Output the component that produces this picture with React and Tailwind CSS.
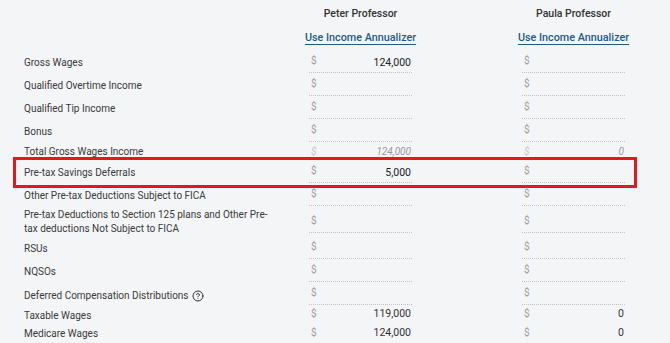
import React from 'react'
import { CircleHelp } from 'lucide-react'

const font = { fontFamily: 'Roboto, "Liberation Sans", sans-serif' }

function Cell({ value, kind = 'input' }) {
  if (kind === 'total') {
    return (
      <div className="w-[103px] h-full flex items-center justify-between pl-[2px] pr-[1px] pb-[1px]">
        <span className="text-[10px] leading-[12px] italic text-[#c4c6c8]">$</span>
        <span className="text-[10px] leading-[12px] italic text-[#9a9a9a]">{value}</span>
      </div>
    )
  }
  if (kind === 'plain') {
    return (
      <div className="w-[103px] h-full flex items-center justify-between pl-[2px] pr-[1px]">
        <span className="text-[10px] leading-[12px] text-[#9c9c9c]">$</span>
        <span className="text-[10.5px] leading-[14px] text-[#333]">{value}</span>
      </div>
    )
  }
  return (
    <div className="w-[103px] h-full flex items-end justify-between pl-[2px] pr-[1px] border-b border-dotted border-[#bfc1c3]">
      <span className="text-[10px] leading-[12px] text-[#9c9c9c] pb-[5px]">$</span>
      <span className="text-[10.5px] leading-[14px] text-[#222] pb-[2px]">{value}</span>
    </div>
  )
}

function Row({ label, h, pt, peter, paula, kind, children }) {
  return (
    <div className="flex" style={{ height: h }}>
      <div className="w-[285px] shrink-0" style={{ paddingTop: pt }}>
        {children || (
          <div className="text-[10px] leading-[14px] text-[#3a3a3a] w-[250px]">{label}</div>
        )}
      </div>
      <Cell value={peter} kind={kind} />
      <div className="w-[110px] shrink-0" />
      <Cell value={paula} kind={kind} />
    </div>
  )
}

export default function App() {
  return (
    <div className="relative w-[670px] h-[343px] overflow-hidden bg-[#f4f5f7] pl-[24px]" style={font}>
      <div className="flex h-[28px] items-center">
        <div className="w-[285px] shrink-0" />
        <div className="w-[103px] text-center text-[10.5px] font-medium text-[#333]">Peter Professor</div>
        <div className="w-[110px] shrink-0" />
        <div className="w-[103px] text-center text-[10.5px] font-medium text-[#333]">Paula Professor</div>
      </div>
      <div className="flex h-[22px] pt-[3px]">
        <div className="w-[285px] shrink-0" />
        <div className="w-[103px] flex justify-center">
          <span className="whitespace-nowrap text-[10.8px] leading-[14px] font-medium text-[#1d5a8a] underline underline-offset-[3px]">Use Income Annualizer</span>
        </div>
        <div className="w-[110px] shrink-0" />
        <div className="w-[103px] flex justify-center">
          <span className="whitespace-nowrap text-[10.8px] leading-[14px] font-medium text-[#1d5a8a] underline underline-offset-[3px]">Use Income Annualizer</span>
        </div>
      </div>

      <Row label="Gross Wages" h={23} pt={6} peter="124,000" />
      <Row label="Qualified Overtime Income" h={23} pt={6} />
      <Row label="Qualified Tip Income" h={23} pt={6} />
      <Row label="Bonus" h={23} pt={6} />
      <Row label="Total Gross Wages Income" h={20} pt={3} peter="124,000" paula="0" kind="total" />
      <Row label="Pre-tax Savings Deferrals" h={21} pt={4} peter="5,000" />
      <Row label="Other Pre-tax Deductions Subject to FICA" h={23} pt={6} />
      <Row label="Pre-tax Deductions to Section 125 plans and Other Pre-tax deductions Not Subject to FICA" h={27} pt={2} />
      <Row label="RSUs" h={26} pt={9} />
      <Row label="NQSOs" h={23} pt={6} />
      <Row h={23} pt={7}>
        <div className="flex items-center text-[10px] leading-[14px] text-[#3a3a3a]">
          Deferred Compensation Distributions
          <CircleHelp size={12} strokeWidth={2} className="ml-[3px] text-[#333]" />
        </div>
      </Row>
      <Row label="Taxable Wages" h={18} pt={4} peter="119,000" paula="0" kind="plain" />
      <Row label="Medicare Wages" h={20} pt={4} peter="124,000" paula="0" kind="plain" />

      <div className="absolute left-[13px] top-[157px] w-[624px] h-[31px] border-[3px] border-[#e0191e]" />
    </div>
  )
}
